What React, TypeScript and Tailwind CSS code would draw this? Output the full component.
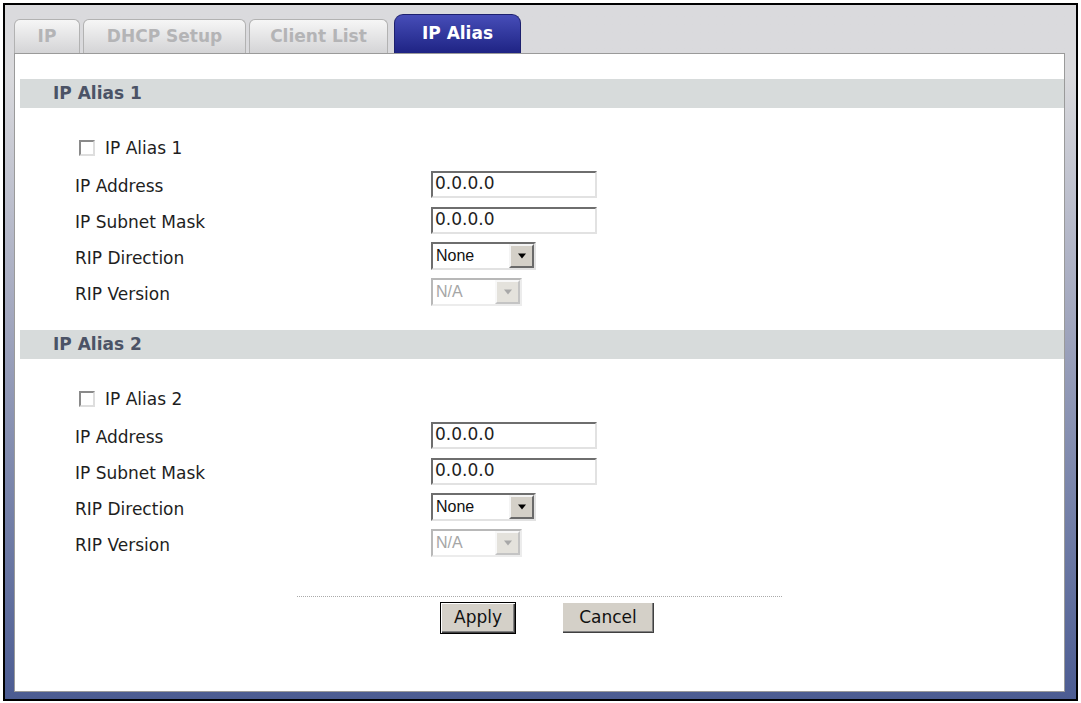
import React from 'react';

const tabs = [
  { name: 'IP', width: 'w-[66px]' },
  { name: 'DHCP Setup', width: 'w-[163px]' },
  { name: 'Client List', width: 'w-[139px]' },
];

const TextBox = ({ value }: { value: string }) => (
  <div className="w-[166px] h-[27px] bg-white border-2 border-t-[#6e6e6e] border-l-[#6e6e6e] border-b-[#e2e2e2] border-r-[#e2e2e2] flex items-center pl-[2px] text-[17px] text-[#1e1e1e] font-['DejaVu_Sans',sans-serif]">
    {value}
  </div>
);

const Arrow = ({ color }: { color: string }) => (
  <svg width="10" height="6" viewBox="0 0 10 6">
    <polygon points="1,0.5 9,0.5 5,5.5" fill={color} />
  </svg>
);

const Select = ({ value, disabled }: { value: string; disabled?: boolean }) => (
  <div
    className={`h-[28px] bg-white border-2 flex items-center justify-between font-['Liberation_Sans',Arial,sans-serif] text-[16px] ${
      disabled
        ? 'w-[91px] border-t-[#b8b8b8] border-l-[#b8b8b8] border-b-[#ececec] border-r-[#ececec] text-[#a6a6a6]'
        : 'w-[105px] border-t-[#6e6e6e] border-l-[#6e6e6e] border-b-[#e2e2e2] border-r-[#e2e2e2] text-[#111]'
    }`}
  >
    <span className="pl-[3px]">{value}</span>
    <span
      className={`h-full w-[25px] flex items-center justify-center border-2 ${
        disabled
          ? 'bg-[#e4e2dc] border-t-[#f8f8f8] border-l-[#f8f8f8] border-b-[#c4c4c4] border-r-[#c4c4c4]'
          : 'bg-[#d4d0c8] border-t-[#f4f4f4] border-l-[#f4f4f4] border-b-[#6a6a6a] border-r-[#6a6a6a]'
      }`}
    >
      <Arrow color={disabled ? '#a8a8a8' : '#000'} />
    </span>
  </div>
);

const Row = ({ label, children }: { label: string; children: React.ReactNode }) => (
  <div className="h-[36px] flex items-center">
    <div className="w-[416px] pl-[60px] pt-[5px] text-[17px] text-[#1e1e1e]">{label}</div>
    {children}
  </div>
);

const AliasBlock = ({ n }: { n: number }) => (
  <>
    <div className="ml-[5px] h-[29px] bg-[#d7dbdb] flex items-center pl-[33px] text-[17px] font-bold text-[#4b5366]">
      IP Alias {n}
    </div>
    <div className="mt-[22px]">
      <div className="h-[36px] flex items-center pl-[64px]">
        <span className="w-[16px] h-[16px] bg-white border-2 border-t-[#8a8a8a] border-l-[#8a8a8a] border-b-[#dedede] border-r-[#dedede]" />
        <span className="ml-[10px] pt-[2px] text-[17px] text-[#1e1e1e]">IP Alias {n}</span>
      </div>
      <Row label="IP Address">
        <TextBox value="0.0.0.0" />
      </Row>
      <Row label="IP Subnet Mask">
        <TextBox value="0.0.0.0" />
      </Row>
      <Row label="RIP Direction">
        <Select value="None" />
      </Row>
      <Row label="RIP Version">
        <Select value="N/A" disabled />
      </Row>
    </div>
  </>
);

export default function App() {
  return (
    <div className="w-[1081px] h-[703px] bg-white pt-[3px] pl-[3px] font-['DejaVu_Sans',Verdana,sans-serif]">
      <div className="w-[1075px] h-[698px] border-2 border-black flex flex-col bg-gradient-to-b from-[#dadadd] from-10% via-[#a2a7be] via-45% to-[#4c5c92]">
        {/* tab bar */}
        <div className="h-[48px] flex items-end pl-[9px] gap-[3px]">
          {tabs.map((t) => (
            <div
              key={t.name}
              className={`${t.width} h-[34px] rounded-t-[6px] border border-b-0 border-[#b2b2b2] bg-gradient-to-b from-[#f6f6f6] to-[#d4d4d6] flex items-center justify-center text-[17px] font-bold text-[#b4b4b6]`}
            >
              {t.name}
            </div>
          ))}
          <div className="ml-[3px] w-[127px] h-[39px] rounded-t-[9px] border border-b-0 border-[#1d206e] bg-gradient-to-b from-[#474db8] to-[#1f2384] flex items-center justify-center text-[17px] font-bold text-white">
            IP Alias
          </div>
        </div>
        {/* content frame */}
        <div className="flex-1 pl-[9px] pr-[11px] pb-[7px] flex">
          <div className="flex-1 bg-white border border-[#9a9a9a] pt-[25px] flex flex-col">
            <AliasBlock n={1} />
            <div className="mt-[20px]">
              <AliasBlock n={2} />
            </div>
            <div className="mt-[35px] mx-auto w-[485px] border-t border-dotted border-[#aaaaaa]" />
            <div className="mt-[5px] flex justify-center gap-[46px] pl-[15px] text-[17px] text-[#111]">
              <button className="w-[76px] h-[32px] bg-[#d4d0c8] border border-black shadow-[inset_1px_1px_0_#ffffff,inset_-1px_-1px_0_#404040,inset_-2px_-2px_0_#808080]">
                Apply
              </button>
              <button className="w-[92px] h-[31px] bg-[#d4d0c8] border-0 shadow-[inset_1px_1px_0_#ffffff,inset_-1px_-1px_0_#404040,inset_-2px_-2px_0_#808080]">
                Cancel
              </button>
            </div>
          </div>
        </div>
      </div>
    </div>
  );
}
